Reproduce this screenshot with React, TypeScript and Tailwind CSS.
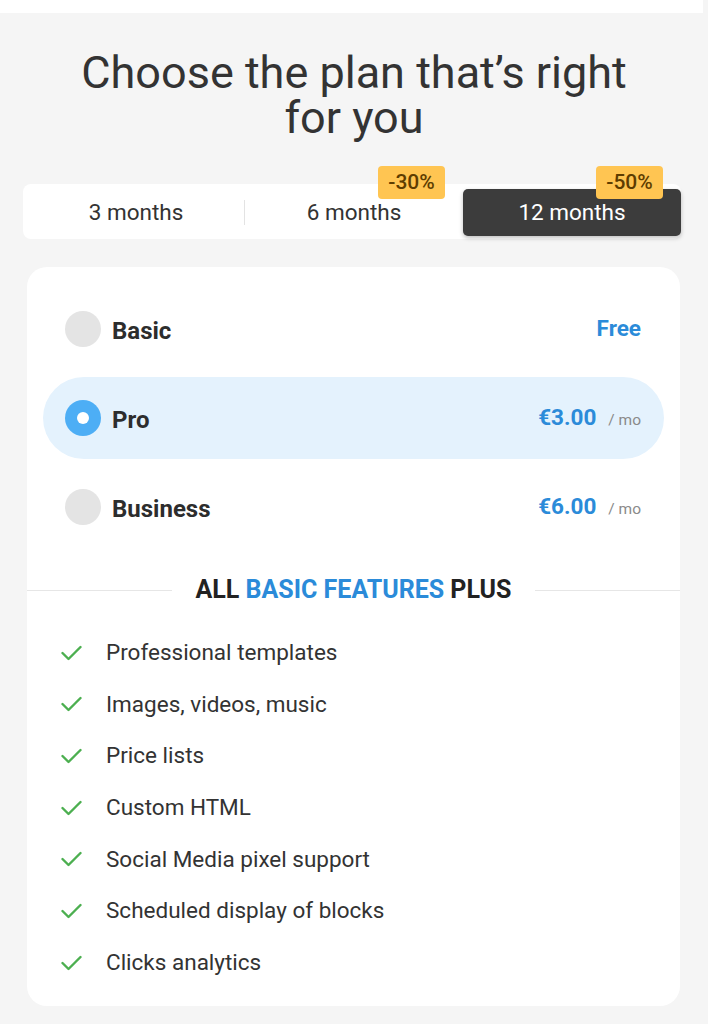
import React from "react";

const features = [
  "Professional templates",
  "Images, videos, music",
  "Price lists",
  "Custom HTML",
  "Social Media pixel support",
  "Scheduled display of blocks",
  "Clicks analytics",
];

function Check() {
  return (
    <svg width="21" height="16" viewBox="0 0 21 16" fill="none">
      <polyline points="1.5,8 7.5,14 19.5,2" stroke="#4caf50" strokeWidth="2.4" strokeLinecap="round" strokeLinejoin="round" />
    </svg>
  );
}

function Radio({ selected }: { selected?: boolean }) {
  if (selected) {
    return (
      <div className="w-[36px] h-[36px] rounded-full bg-[#4daef5] flex items-center justify-center shrink-0">
        <div className="w-[12px] h-[12px] rounded-full bg-white" />
      </div>
    );
  }
  return <div className="w-[36px] h-[36px] rounded-full bg-[#e4e4e4] shrink-0" />;
}

function PlanRow({ name, price, per, selected }: { name: string; price: string; per?: boolean; selected?: boolean }) {
  return (
    <div className={`h-[82px] rounded-full flex items-center pl-[22px] pr-[23px] ${selected ? "bg-[#e4f2fd]" : ""}`}>
      <Radio selected={selected} />
      <span className="ml-[11px] text-[24px] font-bold text-[#2d2d2d] mt-[3px]">{name}</span>
      <div className="ml-auto flex items-baseline">
        <span className="font-bold text-[#2b8bd9] text-[22.5px]">{price}</span>
        {per && <span className="ml-[12px] text-[15.5px] text-[#8a8a8a]">/ mo</span>}
      </div>
    </div>
  );
}

export default function App() {
  return (
    <div className="w-[708px] min-h-[1024px] bg-[#f5f5f5] font-['Roboto',sans-serif] text-[#333]">
      <div className="w-[703px] h-[13px] bg-white" />
      <h1 className="mt-[37px] text-center text-[45px] leading-[45px] font-normal text-[#333] px-[50px]">
        Choose the plan that’s right for you
      </h1>

      <div className="mt-[44px] ml-[23px] w-[658px] h-[55px] bg-white rounded-[8px] flex pl-[4px] pt-[5px] pb-[3px]">
        <div className="flex-1 flex items-center justify-center text-[22.5px] text-[#333] relative">
          3 months
          <div className="absolute right-0 top-[11px] w-px h-[25px] bg-[#e3e3e3]" />
        </div>
        <div className="flex-1 flex items-center justify-center text-[22.5px] text-[#333] relative">
          6 months
          <div className="absolute right-[18px] top-[-23px] w-[67px] h-[33px] rounded-[4px] bg-[#ffc552] flex items-center justify-center text-[21px] font-medium text-[#5e3d00]">
            -30%
          </div>
        </div>
        <div className="flex-1 flex items-center justify-center text-[22.5px] text-white relative bg-[#3c3c3c] rounded-[5px] shadow-[0_2px_4px_rgba(0,0,0,0.25)]">
          12 months
          <div className="absolute right-[18px] top-[-23px] w-[67px] h-[33px] rounded-[4px] bg-[#ffc552] flex items-center justify-center text-[21px] font-medium text-[#5e3d00]">
            -50%
          </div>
        </div>
      </div>

      <div className="mt-[28px] ml-[27px] w-[653px] bg-white rounded-[20px] pt-[21px] pb-[17px]">
        <div className="px-[16px] flex flex-col gap-[7px]">
          <PlanRow name="Basic" price="Free" />
          <PlanRow name="Pro" price="€3.00" per selected />
          <PlanRow name="Business" price="€6.00" per />
        </div>

        <div className="mt-[27px] h-[30px] flex items-center">
          <div className="flex-1 h-px bg-[#e6e6e6]" />
          <div className="px-[24px] text-[25px] font-bold text-[#222] uppercase">
            All <span className="text-[#2b8bd9]">Basic Features</span> Plus
          </div>
          <div className="flex-1 h-px bg-[#e6e6e6]" />
        </div>

        <ul className="mt-[22px]">
          {features.map((f) => (
            <li key={f} className="h-[51.67px] flex items-center pl-[34px]">
              <Check />
              <span className="ml-[24px] text-[22.5px] text-[#333]">{f}</span>
            </li>
          ))}
        </ul>
      </div>
    </div>
  );
}
